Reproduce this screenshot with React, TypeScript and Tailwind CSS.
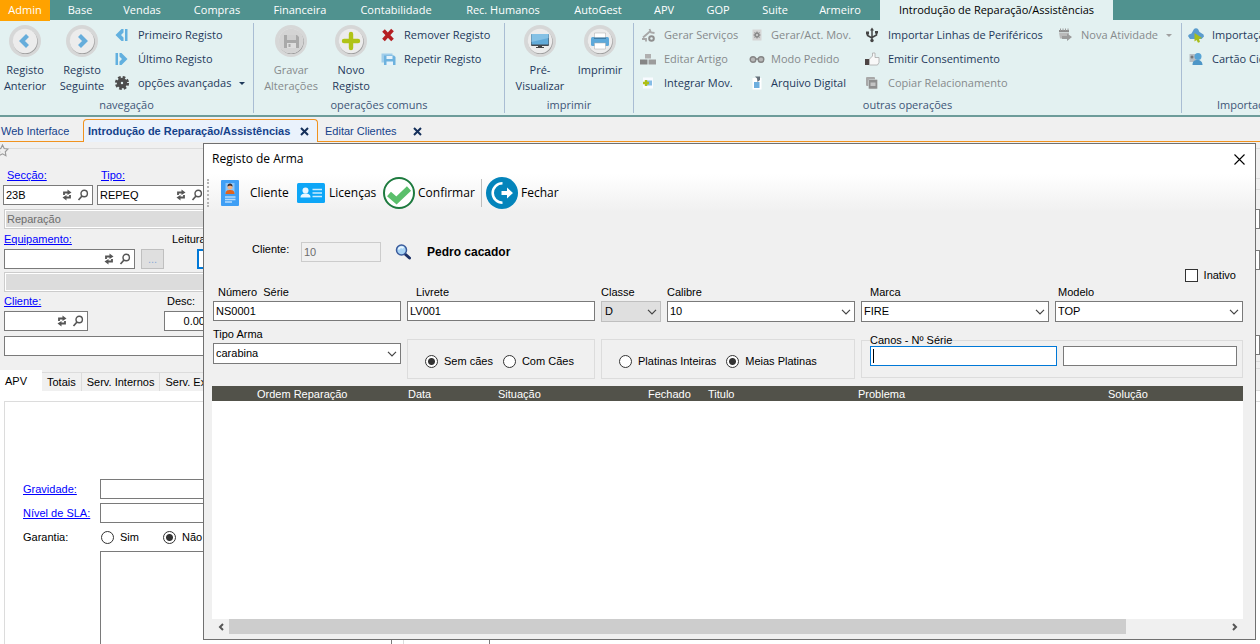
import { useState } from 'react';
import type { ReactNode } from 'react';

type RibbonEntry = { label: string; icon: ReactNode; disabled?: boolean; menu?: boolean };

const RIBBON_TABS = [
  { label: 'Base', width: 'w-[60px]' },
  { label: 'Vendas', width: 'w-16' },
  { label: 'Compras', width: 'w-[86px]' },
  { label: 'Financeira', width: 'w-20' },
  { label: 'Contabilidade', width: 'w-28' },
  { label: 'Rec. Humanos', width: 'w-[102px]' },
  { label: 'AutoGest', width: 'w-[88px]' },
  { label: 'APV', width: 'w-11' },
  { label: 'GOP', width: 'w-16' },
  { label: 'Suite', width: 'w-[50px]' },
  { label: 'Armeiro', width: 'w-20' },
];

const COLUMNS = [
  { label: '', width: 'w-[44px]' },
  { label: 'Ordem Reparação', width: 'w-[151px]' },
  { label: 'Data', width: 'w-[90px]' },
  { label: 'Situação', width: 'w-[150px]' },
  { label: 'Fechado', width: 'w-[60px]' },
  { label: 'Titulo', width: 'w-[150px]' },
  { label: 'Problema', width: 'w-[250px]' },
  { label: 'Solução', width: '' },
];

/* ---------- icons ---------- */

function Round({ children }: { children: ReactNode }) {
  return (
    <svg viewBox="0 0 32 32" className="size-8 shrink-0">
      <circle cx="16" cy="16" r="16" fill="#d6d7d7" />
      <circle cx="16.500" cy="16.800" r="12.300" fill="#9d9d9d" />
      <circle cx="16" cy="16" r="12.200" fill="#ececec" />
      {children}
    </svg>
  );
}

const Prev = () => (
  <Round><path d="M18.5 10.5l-5.500 5.500 5.500 5.500" fill="none" stroke="#66addb" strokeWidth="4.200" /></Round>
);
const Next = () => (
  <Round><path d="M13.5 10.5l5.500 5.500-5.500 5.500" fill="none" stroke="#66addb" strokeWidth="4.200" /></Round>
);
const Save = () => (
  <Round>
    <circle cx="16" cy="16" r="12.200" fill="#d4d4d4" />
    <path d="M9 10h13l2 2v11H9z" fill="#a9a9a9" />
    <path d="M12 10h9v5h-9z" fill="#cfcfcf" />
    <path d="M12 18h9v5h-9z" fill="#dedede" />
    <path d="M13.5 19h2v3h-2z" fill="#a9a9a9" />
  </Round>
);
const Plus = () => (
  <Round><path d="M16 9v14M9 16h14" stroke="#b0c316" strokeWidth="4.400" strokeLinecap="round" /></Round>
);
const Monitor = () => (
  <Round>
    <rect x="7" y="9" width="18" height="12" rx="1" fill="#444b52" />
    <rect x="7.500" y="9" width="17" height="10.500" fill="#62abd9" />
    <path d="M7.500 9h17v4l-17 4z" fill="#85c1e5" />
    <path d="M14 20.500h4v1.500h2v1h-8v-1h2z" fill="#444" />
  </Round>
);
const Printer = () => (
  <Round>
    <rect x="7" y="12" width="18" height="9" rx="1.500" fill="#5ea9da" />
    <path d="M10.500 8h11v5h-11z" fill="#fff" stroke="#aaa" strokeWidth=".5" />
    <path d="M10 12.500h12v1.500H10z" fill="#3f7ca6" />
    <path d="M10.500 18h11v6h-11z" fill="#fff" stroke="#aaa" strokeWidth=".5" />
  </Round>
);

function Small({ children }: { children: ReactNode }) {
  return <svg viewBox="0 0 16 16" className="size-4 shrink-0">{children}</svg>;
}

const First = () => (
  <Small><path d="M9.500 2v3.500L7 8l2.500 2.500V14H7.500L1.500 8l6-6z" fill="#62b0df" /><path d="M11 2h2.500v12H11z" fill="#62b0df" /></Small>
);
const Last = () => (
  <Small><path d="M5.500 2v3.500L8 8l-2.500 2.500V14h2l6-6-6-6z" fill="#62b0df" /><path d="M1.500 2H4v12H1.500z" fill="#62b0df" /></Small>
);
const Gear = () => (
  <Small>
    <circle cx="8" cy="8" r="5.800" fill="none" stroke="#4d4d4d" strokeWidth="2.600" strokeDasharray="2.600 1.950" />
    <circle cx="8" cy="8" r="3.200" fill="none" stroke="#4d4d4d" strokeWidth="4" />
  </Small>
);
const Cross = () => (
  <Small><path d="M3.500 3.500l9 9.500M12.500 3l-9 10" stroke="#b41f22" strokeWidth="3.600" /></Small>
);
const Disks = () => (
  <Small>
    <path d="M1.500 2.500h11v9h-11z" fill="#9fcdea" />
    <path d="M4 4.500h10l1.500 1.500v8H4z" fill="#6db2de" />
    <path d="M6.500 5h6v3h-6zM6.500 10.500h6.500V14H6.500z" fill="#e6f3fb" />
  </Small>
);
const Wrench = () => (
  <Small>
    <path d="M3 10.500L10.500 4M9.500 2l1.500 3.500L14.500 6M2 12h4v2.500" fill="none" stroke="#a7a7a7" strokeWidth="1.800" />
    <circle cx="11.500" cy="11.500" r="2.300" fill="none" stroke="#8f8f8f" strokeWidth="2" />
  </Small>
);
const Blocks = () => (
  <Small>
    <path d="M5 3h6v4.500H5z" fill="#b0b0b0" />
    <path d="M0 8.500h7.500v5H0z" fill="#858585" />
    <path d="M8.500 8.500H16v5H8.500z" fill="#9c9c9c" />
  </Small>
);
const Integrate = () => (
  <Small>
    <path d="M3 2.500h10v11H3z" fill="#f8fbff" />
    <path d="M7 5.500h5v5H7z" fill="#85bce6" />
    <path d="M6 5v6M3 8h6" stroke="#aebf14" strokeWidth="2.400" />
  </Small>
);
const PageGear = () => (
  <Small>
    <path d="M3.500 2.500h9v11h-9z" fill="#d5d5d5" />
    <circle cx="8" cy="8" r="1.900" fill="none" stroke="#8a8a8a" strokeWidth="1.600" />
    <path d="M8 4.500v1.500M8 10v1.500M4.500 8H6M10 8h1.500M5.500 5.500l1 1M9.500 9.500l1 1M10.500 5.500l-1 1M6.500 9.500l-1 1" stroke="#8a8a8a" />
  </Small>
);
const Glasses = () => (
  <Small>
    <circle cx="4" cy="8.500" r="2.800" fill="#b9b9b9" stroke="#858585" strokeWidth="1.400" />
    <circle cx="12" cy="8.500" r="2.800" fill="#b9b9b9" stroke="#858585" strokeWidth="1.400" />
    <path d="M6.500 8h3" stroke="#858585" strokeWidth="1.500" />
  </Small>
);
const Archive = () => (
  <Small>
    <path d="M3.500 3h9v11.500h-9z" fill="#fff" />
    <path d="M5 7h5.500v6H5z" fill="#6caede" />
    <path d="M6 1.500h5V5L8.500 7 8 3.500z" fill="#65707a" />
  </Small>
);
const Usb = () => (
  <Small>
    <path d="M8 2v11M3.500 6v2.500L8 11M12.500 5v3L8 10.500" fill="none" stroke="#444" strokeWidth="1.500" />
    <circle cx="8" cy="13.500" r="1.700" fill="#444" />
    <path d="M8 .5l2 3H6zM2 4.500h3v3H2zM11 4h3v2.500h-3z" fill="#444" />
  </Small>
);
const Thumb = () => (
  <Small>
    <path d="M1 8h4v6H1z" fill="#4d4545" />
    <path d="M5.500 8l3-3V2h2.500v4.500h4v5L13.500 14h-8z" fill="#f8f8f8" stroke="#aaa" strokeWidth=".8" />
  </Small>
);
const Copy = () => (
  <Small>
    <rect x="2" y="2" width="9" height="9" rx="1" fill="#a8a8a8" />
    <rect x="4.500" y="4.500" width="9" height="9.500" rx="1" fill="#8e8e8e" stroke="#d6dede" strokeWidth=".6" />
    <path d="M6.500 7.500h5v3.500h-5z" fill="#c4c4c4" />
  </Small>
);
const Calendar = () => (
  <Small>
    <path d="M2 3h10v2H2z" fill="#8d8d8d" />
    <path d="M3.500 1.500V4M6 1.500V4M8.500 1.500V4M11 1.500V4" stroke="#999" />
    <path d="M2 5.500h10V9H6v2.500H3z" fill="#b9b9b9" />
    <path d="M5 9h5V6.500L15 10l-5 4v-2H5z" fill="#9b9b9b" />
  </Small>
);
const Cloud = () => (
  <Small>
    <path d="M0 9l1-1.500 2.500-1L6 2c1-1 3-1 4 0l1.500 3 4 2.500.5 2-2.500 2.500H2z" fill="#5b9ccd" />
    <path d="M6.500 6l7.500 5-3 1 1 3-2 .8-1.500-2.800-2 1.500z" fill="#a9bd18" />
  </Small>
);
const IdCard = () => (
  <Small>
    <path d="M1.500 3h9v8h-9z" fill="#b8bec3" />
    <circle cx="4" cy="6" r="1.500" fill="#777" />
    <circle cx="10" cy="5.500" r="3.500" fill="#58a4d5" />
    <path d="M4.500 14c0-4 2-5 5-5s5 2 5 5z" fill="#4d96c7" />
  </Small>
);
const Swap = () => (
  <svg viewBox="0 0 12 12" className="size-3 shrink-0">
    <path d="M3 6V3.500h4M9 6v2.500H5" fill="none" stroke="#555" strokeWidth="1.800" />
    <path d="M6.500 .5L10.500 3.500l-4 2.500zM5.500 6L1.500 8.500l4 3z" fill="#555" />
  </svg>
);
const Lens = () => (
  <svg viewBox="0 0 12 12" className="size-3 shrink-0">
    <circle cx="7.200" cy="4.500" r="3.200" fill="none" stroke="#555" strokeWidth="1.400" />
    <path d="M5 7L1.500 11" stroke="#555" strokeWidth="1.700" />
  </svg>
);
const BlueLens = () => (
  <svg viewBox="0 0 16 16" className="size-4">
    <path d="M10 10l4.500 4" stroke="#1d3166" strokeWidth="3" strokeLinecap="round" />
    <circle cx="6.500" cy="6" r="5" fill="#a9d3f4" stroke="#3a5b9c" strokeWidth="1.500" />
    <path d="M3.500 5.500c.5-2 3.500-3 5-1.500" fill="none" stroke="#e8f6ff" strokeWidth="1.800" />
  </svg>
);
const ClientCard = () => (
  <svg viewBox="0 0 20 28" className="h-7 w-5">
    <rect x="1" y="1" width="18" height="26" rx="1" fill="#3f9ff5" />
    <path d="M5.500 4h9v11h-9z" fill="#8cc5f7" />
    <circle cx="10" cy="8" r="2.500" fill="#f2b183" />
    <path d="M7.400 7.500c0-4 5.200-4 5.200 0L10 6.500z" fill="#3d2c2a" />
    <path d="M5.500 15c0-3.500 2-4 4.500-4s4.500.5 4.500 4z" fill="#e2641d" />
    <path d="M5 18h10.500M5 20.500h10.500M5 23h7" stroke="#b7dcfb" strokeWidth="1.400" />
  </svg>
);
const LicenceCard = () => (
  <svg viewBox="0 0 28 20" className="h-5 w-7">
    <rect width="28" height="20" rx="1.500" fill="#0da6f7" />
    <circle cx="8.500" cy="7.500" r="3" fill="#eaf7ff" />
    <path d="M3.500 14.500c0-3 2-4 5-4s5 1 5 4z" fill="#eaf7ff" />
    <path d="M15.500 6.500h9.500M15.500 10h9.500M15.500 13.500h9.500" stroke="#c9ecff" strokeWidth="1.600" />
  </svg>
);
const ConfirmIcon = () => (
  <svg viewBox="0 0 32 32" className="size-8">
    <circle cx="16" cy="16" r="15" fill="#fff" stroke="#1d7a3e" strokeWidth="2" />
    <path d="M6 17l7.500 6.500L26 11.500" fill="none" stroke="#5abf6b" strokeWidth="6" />
  </svg>
);
const ExitIcon = () => (
  <svg viewBox="0 0 32 32" className="size-8">
    <circle cx="16" cy="16" r="16" fill="#0484bb" />
    <path d="M16.500 6.200A9.800 9.800 0 1 0 16.500 25.800" fill="none" stroke="#fff" strokeWidth="2.600" />
    <path d="M15.500 14h5.500v-3.500l6 5.500-6 5.500V18h-5.500z" fill="#fff" />
  </svg>
);
const TabClose = () => (
  <svg viewBox="0 0 9 9" className="size-[9px]"><path d="M1 1l7 7M8 1L1 8" stroke="#15305b" strokeWidth="2" /></svg>
);

/* ---------- ribbon ---------- */

function BigButton({ icon, lines, disabled, width }: { icon: ReactNode; lines: string[]; disabled?: boolean; width: string }) {
  return (
    <button disabled={disabled} className={`flex shrink-0 flex-col items-center ${width} ${disabled ? 'text-[#868a8c]' : 'text-[#1e395b]'}`}>
      {icon}
      <span className="mt-[5px] leading-4">
        {lines.map((line) => <span key={line} className="block whitespace-nowrap">{line}</span>)}
      </span>
    </button>
  );
}

function ButtonList({ entries, width, gap }: { entries: RibbonEntry[]; width: string; gap: string }) {
  return (
    <div className={`flex shrink-0 flex-col ${width}`}>
      {entries.map((e) => (
        <button key={e.label} disabled={e.disabled} className={`flex h-6 items-center whitespace-nowrap ${gap} ${e.disabled ? 'text-[#868a8c]' : 'text-[#1e395b]'}`}>
          {e.icon}
          {e.label}
          {e.menu && <span className={`border-x-[3px] border-t-[3px] border-x-transparent ${e.disabled ? 'border-t-[#a0a0a0]' : 'border-t-[#1e395b]'}`} />}
        </button>
      ))}
    </div>
  );
}

function Group({ title, width, children }: { title: string; width: string; children: ReactNode }) {
  return (
    <section className={`flex shrink-0 flex-col border-r border-[#a9bdd3] ${width}`}>
      <div className="flex h-[75px] items-start">{children}</div>
      <h2 className="text-center leading-4 text-[#3e5577]">{title}</h2>
    </section>
  );
}

function Ribbon() {
  return (
    <header className="shrink-0 overflow-hidden font-['Open_Sans',sans-serif] text-[11px]">
      <nav className="flex h-5 bg-[#50928f] text-white">
        <button className="h-[21px] w-[50px] shrink-0 bg-[#ffa200]">Admin</button>
        {RIBBON_TABS.map((t) => <button key={t.label} className={`shrink-0 whitespace-nowrap ${t.width}`}>{t.label}</button>)}
        <button className="w-[233px] shrink-0 bg-[#e3f1f1] whitespace-nowrap text-black">Introdução de Reparação/Assistências</button>
      </nav>
      <div className="flex h-[97px] border-b-2 border-[#6d9c9a] bg-[#e3f1f1] pt-[3px] pb-0.5">
        <Group title="navegação" width="w-[254px]">
          <div className="flex pt-0.5">
            <BigButton icon={<Prev />} lines={['Registo', 'Anterior']} width="w-[50px]" />
            <BigButton icon={<Next />} lines={['Registo', 'Seguinte']} width="w-16" />
          </div>
          <ButtonList width="w-[138px]" gap="gap-2" entries={[
            { label: 'Primeiro Registo', icon: <First /> },
            { label: 'Último Registo', icon: <Last /> },
            { label: 'opções avançadas', icon: <Gear />, menu: true },
          ]} />
        </Group>
        <Group title="operações comuns" width="w-[251px]">
          <div className="flex pt-0.5 pl-1.5">
            <BigButton icon={<Save />} lines={['Gravar', 'Alterações']} width="w-[62px]" disabled />
            <BigButton icon={<Plus />} lines={['Novo', 'Registo']} width="w-[58px]" />
          </div>
          <ButtonList width="w-[120px]" gap="gap-2" entries={[
            { label: 'Remover Registo', icon: <Cross /> },
            { label: 'Repetir Registo', icon: <Disks /> },
          ]} />
        </Group>
        <Group title="imprimir" width="w-[129px]">
          <div className="flex pt-0.5 pl-1">
            <BigButton icon={<Monitor />} lines={['Pré-', 'Visualizar']} width="w-[62px]" />
            <BigButton icon={<Printer />} lines={['Imprimir']} width="w-[58px]" />
          </div>
        </Group>
        <Group title="outras operações" width="w-[548px]">
          <div className="flex pl-1.5">
            <ButtonList width="w-[109px]" gap="gap-2" entries={[
              { label: 'Gerar Serviços', icon: <Wrench />, disabled: true },
              { label: 'Editar Artigo', icon: <Blocks />, disabled: true },
              { label: 'Integrar Mov.', icon: <Integrate /> },
            ]} />
            <ButtonList width="w-[115px]" gap="gap-1.5" entries={[
              { label: 'Gerar/Act. Mov.', icon: <PageGear />, disabled: true },
              { label: 'Modo Pedido', icon: <Glasses />, disabled: true },
              { label: 'Arquivo Digital', icon: <Archive /> },
            ]} />
            <ButtonList width="w-[193px]" gap="gap-2" entries={[
              { label: 'Importar Linhas de Periféricos', icon: <Usb /> },
              { label: 'Emitir Consentimento', icon: <Thumb /> },
              { label: 'Copiar Relacionamento', icon: <Copy />, disabled: true },
            ]} />
            <ButtonList width="w-[120px]" gap="gap-2" entries={[
              { label: 'Nova Atividade', icon: <Calendar />, disabled: true, menu: true },
            ]} />
          </div>
        </Group>
        <Group title="Importação" width="w-[130px]">
          <div className="pl-1.5">
            <ButtonList width="w-[130px]" gap="gap-2" entries={[
              { label: 'Importação', icon: <Cloud /> },
              { label: 'Cartão Cidadão', icon: <IdCard /> },
            ]} />
          </div>
        </Group>
      </div>
    </header>
  );
}

function DocTabs() {
  return (
    <nav className="flex h-[25px] shrink-0 items-end bg-[#f0f0f0] text-[#15428b]">
      <a href="#web" className="flex h-[22px] w-[83px] items-center border-b border-[#f0921e] pt-0.5 pl-px">Web Interface</a>
      <a href="#rep" className="flex h-[23px] w-[235px] shrink-0 items-center justify-between rounded-t-sm border-x border-t border-[#f0921e] bg-[#eaf2fc] pr-2 pl-1 font-bold whitespace-nowrap">
        Introdução de Reparação/Assistências
        <TabClose />
      </a>
      <a href="#cli" className="flex h-[22px] flex-1 items-center gap-4 border-b border-[#f0921e] pt-0.5 pl-[7px]">
        Editar Clientes
        <TabClose />
      </a>
    </nav>
  );
}

/* ---------- form behind the dialog ---------- */

function Lookup({ id, value, width }: { id: string; value?: string; width: string }) {
  return (
    <div className={`flex h-5 shrink-0 items-center gap-1 border border-[#7a7a7a] bg-white pr-[3px] ${width}`}>
      <input id={id} defaultValue={value} className="min-w-0 flex-1 pl-0.5 outline-none" />
      <Swap />
      <Lens />
    </div>
  );
}

const radioClass = 'size-[13px] shrink-0 appearance-none rounded-full border border-[#333] bg-white checked:bg-[radial-gradient(circle,#333_3px,#fff_4px)]';
const linkClass = 'text-[#0000ff] underline';
const boxClass = 'h-5 shrink-0 border border-[#7a7a7a] bg-white';
const readOnlyClass = 'ml-1 h-5 shrink-0 border border-[#ccc] bg-[#dcdcdc] pl-0.5 text-[#6d6d6d] ring-1 ring-inset ring-white';

function RepairForm() {
  return (
    <div className="flex h-full">
      <div className="flex w-[489px] shrink-0 flex-col leading-[14px]">
        <div className="flex h-[26px] shrink-0 items-start">
          <svg viewBox="0 0 14 14" className="mt-0.5 -ml-1 size-[13px] shrink-0"><path d="M7 1l1.800 3.800 4.200.6-3 3 .7 4.200L7 10.600l-3.700 2 .7-4.200-3-3 4.200-.6z" fill="#eee" stroke="#999" strokeWidth="1.200" /></svg>
          <span className="mt-1.5 flex-1 border-t border-[#dcdcdc]" />
        </div>
        <div className="flex pl-[7px]">
          <label htmlFor="seccao" className={`w-[94px] ${linkClass}`}>Secção:</label>
          <label htmlFor="tipo" className={linkClass}>Tipo:</label>
        </div>
        <div className="mt-[3px] flex gap-1 pl-[3px]">
          <Lookup id="seccao" value="23B" width="w-[90px]" />
          <Lookup id="tipo" value="REPEQ" width="w-[110px]" />
        </div>
        <input disabled aria-label="Descrição" defaultValue="Reparação" className={`mt-1 ${readOnlyClass}`} />
        <div className="mt-[3px] flex pl-1">
          <label htmlFor="equip" className={`w-[168px] ${linkClass}`}>Equipamento:</label>
          <label htmlFor="leitura">Leitura:</label>
        </div>
        <div className="mt-[3px] flex pl-1">
          <Lookup id="equip" width="w-[131px]" />
          <button className="ml-1.5 h-5 w-[23px] border border-[#bfbfbf] bg-[#dfdfdf] text-[#8aa9d6]">...</button>
          <input id="leitura" className="ml-[33px] h-5 w-20 border-2 border-[#0078d7] bg-white" />
        </div>
        <input disabled aria-label="Equipamento descrição" className={`mt-[3px] ${readOnlyClass}`} />
        <div className="mt-0.5 flex pl-1">
          <label htmlFor="cliente-rep" className={`w-[163px] ${linkClass}`}>Cliente:</label>
          <label htmlFor="desc">Desc:</label>
        </div>
        <div className="mt-[3px] flex pl-1">
          <Lookup id="cliente-rep" width="w-[84px]" />
          <input id="desc" defaultValue="0.00" className={`ml-[76px] w-[42px] text-right ${boxClass}`} />
        </div>
        <input aria-label="Nome" className={`mt-[5px] ml-1 ${boxClass}`} />
        <div className="mt-3.5 flex h-[21px] shrink-0 items-end">
          <button className="h-full w-[42px] bg-white pr-2.5">APV</button>
          {['Totais', 'Serv. Internos', 'Serv. Externos'].map((t) => (
            <button key={t} className="h-[19px] shrink-0 border-t border-r border-[#dcdcdc] px-[5px]">{t}</button>
          ))}
        </div>
        <div className="flex min-h-0 flex-1 flex-col bg-white pt-2.5 pl-1">
          <div className="mr-[85px] min-h-0 flex-1 overflow-hidden border-x border-t border-[#dcdcdc] pt-[77px]">
            <div className="grid grid-cols-[77px_1fr] items-center gap-y-1 pl-[18px]">
              <label htmlFor="gravidade" className={linkClass}>Gravidade:</label>
              <input id="gravidade" className={boxClass} />
              <label htmlFor="sla" className={linkClass}>Nível de SLA:</label>
              <input id="sla" className={boxClass} />
              <span className="h-5 pt-[3px]">Garantia:</span>
              <div className="flex h-5 items-center gap-6 pl-px">
                <label className="flex items-center gap-1.5"><input type="radio" name="garantia" className={radioClass} />Sim</label>
                <label className="flex items-center gap-1.5"><input type="radio" name="garantia" defaultChecked className={radioClass} />Não</label>
              </div>
            </div>
            <textarea aria-label="Observações" className="mt-1 ml-[95px] block h-[120px] w-[292px] resize-none border border-[#7a7a7a] bg-white" />
          </div>
        </div>
      </div>
      <div className="flex flex-1 flex-col">
        <div className="mt-1.5 h-[30px] border-t border-[#dcdcdc]" />
        <div className="h-3 border-y border-[#dcdcdc]" />
        <input aria-label="Observação 1" className={`mt-[19px] ${boxClass}`} />
        <input aria-label="Observação 2" className={`mt-[21px] ${boxClass}`} />
        <input aria-label="Observação 3" className={`mt-[65px] ${boxClass}`} />
        <div className="mt-1.5 h-2 border-y border-[#dcdcdc]" />
        <div className="mt-[21px] flex-1 border-t border-l border-t-[#dcdcdc] border-l-[#7a7a7a] bg-white pt-2.5">
          <div className="border-t border-[#dcdcdc]" />
        </div>
      </div>
    </div>
  );
}

/* ---------- dialog ---------- */

function TextField({ id, label, value, indent }: { id: string; label: string; value: string; indent: string }) {
  return (
    <div className="flex flex-col">
      <label htmlFor={id} className={`mb-[3px] leading-3 whitespace-pre ${indent}`}>{label}</label>
      <input id={id} defaultValue={value} className={`w-full pl-0.5 outline-none ${boxClass}`} />
    </div>
  );
}

function SelectField({ id, label, value, indent, disabled }: { id: string; label: string; value: string; indent?: string; disabled?: boolean }) {
  return (
    <div className="flex flex-col">
      <label htmlFor={id} className={`mb-[3px] leading-3 ${indent ?? ''}`}>{label}</label>
      <div className="relative">
        <select id={id} disabled={disabled} className={`h-[21px] w-full appearance-none border text-black opacity-100 ${disabled ? 'border-[#bfbfbf] bg-[#dfdfdf] pl-[3px]' : 'border-[#7a7a7a] bg-white pl-0.5'}`}>
          <option>{value}</option>
        </select>
        <svg viewBox="0 0 10 6" className="pointer-events-none absolute top-2 right-1 h-1.5 w-2.5"><path d="M1 .8l4 4 4-4" fill="none" stroke="#444" strokeWidth="1.200" /></svg>
      </div>
    </div>
  );
}

function RadioBox({ name, options, selected, className }: { name: string; options: string[]; selected: string; className?: string }) {
  const [value, setValue] = useState(selected);
  return (
    <div role="radiogroup" aria-label={name} className={`mt-[11px] flex h-10 items-center gap-2.5 border border-[#dcdcdc] pt-1 pl-[17px] ${className ?? ''}`}>
      {options.map((o) => (
        <label key={o} className="flex items-center gap-1.5 whitespace-nowrap">
          <input type="radio" name={name} checked={value === o} onChange={() => setValue(o)} className={radioClass} />
          {o}
        </label>
      ))}
    </div>
  );
}

function WeaponDialog() {
  return (
    <div role="dialog" aria-label="Registo de Arma" className="absolute top-px right-1 bottom-1 left-[203px] flex flex-col border border-[#707070] bg-[#f0f0f0]">
      <div className="flex h-[30px] shrink-0 items-center justify-between bg-white pr-[10px] pl-2 font-['Open_Sans',sans-serif] text-[12px]">
        <h1>Registo de Arma</h1>
        <button aria-label="Fechar janela">
          <svg viewBox="0 0 11 11" className="size-[11px]"><path d="M.5.5l10 10M10.500.5l-10 10" stroke="#000" strokeWidth="1.100" /></svg>
        </button>
      </div>
      <div className="flex h-[38px] shrink-0 items-center bg-linear-to-b from-white to-[#f0f0f0] pl-[3px] font-['Open_Sans',sans-serif] text-[12px]">
        <span className="mr-[11px] h-7 border-l-2 border-dotted border-[#b5b5b5]" />
        <button className="flex w-[77px] items-center gap-2.5"><ClientCard />Cliente</button>
        <button className="flex w-[86px] items-center gap-1"><LicenceCard />Licenças</button>
        <button className="flex w-[98px] items-center gap-[3px]"><ConfirmIcon />Confirmar</button>
        <span className="mr-1 h-7 border-l border-[#bdbdbd]" />
        <button className="flex items-center gap-[3px]"><ExitIcon />Fechar</button>
      </div>
      <div className="flex min-h-0 flex-1 flex-col pt-[30px] pr-3 pb-[5px] pl-2">
        <div className="flex h-5 items-center pl-10">
          <label htmlFor="cliente" className="mb-1.5 w-[49px]">Cliente:</label>
          <input id="cliente" disabled defaultValue="10" className="h-5 w-20 border border-[#ccc] bg-[#f0f0f0] pl-0.5 text-[#6d6d6d]" />
          <button aria-label="Procurar cliente" className="ml-3.5"><BlueLens /></button>
          <strong className="ml-4 text-[12px]">Pedro cacador</strong>
        </div>
        <label className="mt-[7px] flex h-[13px] items-center gap-1.5 self-end pr-[7px]">
          <input type="checkbox" className="size-[13px] appearance-none border border-[#333] bg-white checked:bg-[#333]" />
          Inativo
        </label>
        <div className="mt-1 grid grid-cols-[188fr_188fr_60px_188fr_188fr_188fr] gap-1.5 pl-px">
          <TextField id="serie" label="Número  Série" value="NS0001" indent="pl-[5px]" />
          <TextField id="livrete" label="Livrete" value="LV001" indent="pl-[9px]" />
          <SelectField id="classe" label="Classe" value="D" disabled />
          <SelectField id="calibre" label="Calibre" value="10" />
          <SelectField id="marca" label="Marca" value="FIRE" indent="pl-[9px]" />
          <SelectField id="modelo" label="Modelo" value="TOP" indent="pl-[3px]" />
          <SelectField id="tipo-arma" label="Tipo Arma" value="carabina" />
          <RadioBox name="caes" options={['Sem cães', 'Com Cães']} selected="Sem cães" />
          <RadioBox name="platinas" options={['Platinas Inteiras', 'Meias Platinas']} selected="Meias Platinas" className="col-span-2" />
          <fieldset className="col-span-2 mt-1.5 h-11 min-w-0 border border-[#dcdcdc] pr-[5px] pl-2">
            <legend className="leading-3">Canos - Nº Série</legend>
            <div className="flex gap-1.5">
              <div className="relative flex min-w-0 flex-[188]">
                <input aria-label="Cano 1" className="h-5 w-full border border-[#0078d7] bg-white pl-0.5 outline-none" />
                <span className="absolute top-[3px] left-[3px] h-3.5 w-px bg-black" />
              </div>
              <input aria-label="Cano 2" className="h-5 min-w-0 flex-[173] border border-[#7a7a7a] bg-white" />
            </div>
          </fieldset>
        </div>
        <div className="mt-[7px] min-h-0 flex-1 overflow-hidden bg-white">
          <table className="w-full table-fixed border-collapse">
            <thead className="bg-[#52524a] text-left text-white">
              <tr className="h-[15px]">
                {COLUMNS.map((c) => <th key={c.label} scope="col" className={`p-0 pt-px pl-px leading-[14px] font-normal whitespace-nowrap ${c.width}`}>{c.label}</th>)}
              </tr>
            </thead>
            <tbody />
          </table>
        </div>
        <div className="flex h-[15px] shrink-0 items-center">
          <button aria-label="Deslocar à esquerda" className="flex w-[17px] justify-center"><svg viewBox="0 0 6 8" className="h-2 w-1.5"><path d="M5 1L2 4l3 3" fill="none" stroke="#555" strokeWidth="2" /></svg></button>
          <div className="h-full flex-1"><div className="h-full w-[90%] bg-[#cdcdcd]" /></div>
          <button aria-label="Deslocar à direita" className="flex w-[17px] justify-center"><svg viewBox="0 0 6 8" className="h-2 w-1.5"><path d="M1 1l3 3-3 3" fill="none" stroke="#555" strokeWidth="2" /></svg></button>
        </div>
      </div>
    </div>
  );
}

export default function App() {
  return (
    <div className="flex h-screen flex-col overflow-hidden bg-[#f0f0f0] font-['Liberation_Sans',Arial,sans-serif] text-[11px] text-black">
      <Ribbon />
      <DocTabs />
      <main className="relative min-h-0 flex-1 overflow-hidden">
        <RepairForm />
        <WeaponDialog />
      </main>
    </div>
  );
}
